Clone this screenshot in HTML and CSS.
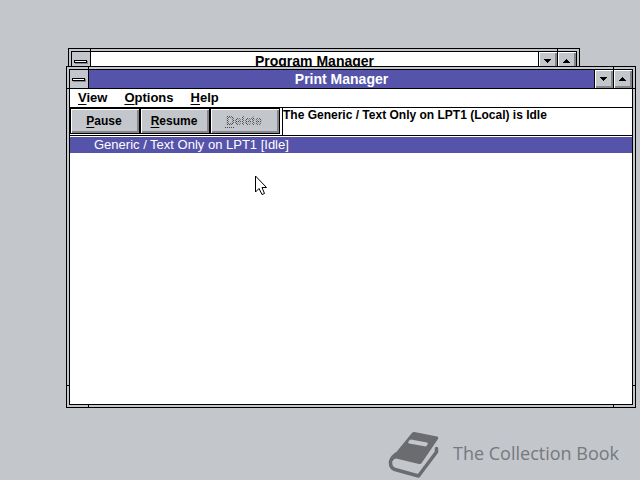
FILE: index.html
```
<!DOCTYPE html>
<html lang="en">
<head>
    <meta charset="UTF-8">
    <meta name="viewport" content="width=device-width, initial-scale=1.0">
    <title>Print Manager</title>
    <link rel="stylesheet" href="styles.css">
</head>
<body>
    <div class="desktop">
        <section class="window window-back">
            <div class="window-inner">
                <header class="titlebar">
                    <button class="control-box" aria-label="Control menu"><span class="control-bar"></span></button>
                    <h2 class="title">Program Manager</h2>
                    <button class="size-btn" aria-label="Minimize">
                        <svg width="7" height="4" viewBox="0 0 7 4" shape-rendering="crispEdges"><path d="M0 0h7v1H0zM1 1h5v1H1zM2 2h3v1H2zM3 3h1v1H3z"/></svg>
                    </button>
                    <button class="size-btn" aria-label="Maximize">
                        <svg width="7" height="4" viewBox="0 0 7 4" shape-rendering="crispEdges"><path d="M3 0h1v1H3zM2 1h3v1H2zM1 2h5v1H1zM0 3h7v1H0z"/></svg>
                    </button>
                </header>
            </div>
        </section>

        <main class="window window-front">
            <div class="window-inner">
                <header class="titlebar active">
                    <button class="control-box" aria-label="Control menu"><span class="control-bar"></span></button>
                    <h1 class="title">Print Manager</h1>
                    <button class="size-btn" aria-label="Minimize">
                        <svg width="7" height="4" viewBox="0 0 7 4" shape-rendering="crispEdges"><path d="M0 0h7v1H0zM1 1h5v1H1zM2 2h3v1H2zM3 3h1v1H3z"/></svg>
                    </button>
                    <button class="size-btn" aria-label="Maximize">
                        <svg width="7" height="4" viewBox="0 0 7 4" shape-rendering="crispEdges"><path d="M3 0h1v1H3zM2 1h3v1H2zM1 2h5v1H1zM0 3h7v1H0z"/></svg>
                    </button>
                </header>

                <nav class="menubar">
                    <button class="menu-item"><u>V</u>iew</button>
                    <button class="menu-item"><u>O</u>ptions</button>
                    <button class="menu-item"><u>H</u>elp</button>
                </nav>

                <div class="toolbar">
                    <button class="tool-btn"><u>P</u>ause</button>
                    <button class="tool-btn"><u>R</u>esume</button>
                    <button class="tool-btn" disabled><span class="dithered"><u>D</u>elete</span></button>
                    <p class="status">The Generic / Text Only on LPT1 (Local) is Idle</p>
                </div>

                <ul class="queue">
                    <li class="queue-item selected">Generic / Text Only on LPT1 [Idle]</li>
                </ul>
            </div>
        </main>

        <footer class="brand">
            <svg class="brand-logo" width="52" height="48" viewBox="0 0 52 48">
                <path fill="none" stroke="#6b6c6f" stroke-width="3.5" stroke-linecap="round" stroke-linejoin="round" d="M9 23 Q3 28 3.500 32 Q3.500 37 8 38.500 L31.500 45 L49.500 21 V17.500"/>
                <path fill="#6b6c6f" d="M24.500 2.500 Q25.500 .5 27.500 1 L50 5.500 Q52 6 51 8 L35 31.500 Q34 33.500 32 33 L9 27.500 Q7 27.500 5.500 30 L3 29 Q5 24 9 21.500 Z"/>
                <path fill="#c3c6cb" d="M24 8.500 L40 11.500 Q41.500 12 40.500 13.500 L39 15.500 L22 12.500 Q20.500 12 21.500 10.500 Q22.500 8.500 24 8.500 Z"/>
            </svg>
            <span class="brand-name">The Collection Book</span>
        </footer>

        <svg class="pointer" width="12" height="20" viewBox="0 0 12 20">
            <path fill="#fff" stroke="#000" d="M.5 1 V17 L4 13.500 L7 19.500 L9.500 18.500 L7 12.500 H11.500 Z"/>
        </svg>
    </div>
</body>
</html>
```
FILE: styles.css
```
:root {
    --grey: #c3c6cb;
    --shadow: #84868b;
    --blue: #5554aa;
    --black: #000000;
    --white: #ffffff;
}

* {
    box-sizing: border-box;
}

body {
    margin: 0;
    font-family: "Liberation Sans", Arial, sans-serif;
    font-size: 13px;
    color: var(--black);
    background-color: var(--grey);
}

button {
    margin: 0;
    padding: 0;
    border: none;
    font: inherit;
    color: inherit;
    background: none;
}

u {
    text-underline-offset: 2px;
}

.desktop {
    position: relative;
    display: flex;
    flex-direction: column;
    justify-content: flex-end;
    height: 100vh;
    overflow: hidden;
}

/* Windows */
.window {
    position: absolute;
    padding: 2px;
    border: 1px solid var(--black);
    background-color: var(--grey);
    /* resize corner marks, only visible in the frame */
    background-image:
        linear-gradient(var(--black), var(--black)),
        linear-gradient(var(--black), var(--black)),
        linear-gradient(var(--black), var(--black)),
        linear-gradient(var(--black), var(--black));
    background-repeat: no-repeat;
    background-size: 1px 100%, 1px 100%, 100% 1px, 100% 1px;
    background-position: left 21px top, right 21px top, left top 21px, left bottom 21px;
}

.window-back {
    top: 48px;
    right: 60px;
    bottom: 80px;
    left: 68px;
}

.window-front {
    top: 66px;
    right: 4px;
    bottom: 72px;
    left: 66px;
}

.window-inner {
    display: flex;
    flex-direction: column;
    height: 100%;
    border: 1px solid var(--black);
    background-color: var(--white);
}

.titlebar {
    display: flex;
    flex: none;
    height: 19px;
    border-bottom: 1px solid var(--black);
}

.titlebar.active {
    color: var(--white);
    background-color: var(--blue);
}

.control-box {
    display: flex;
    align-items: center;
    justify-content: center;
    width: 19px;
    padding-right: 1px;
    border-right: 1px solid var(--black);
    background-color: var(--grey);
}

.control-bar {
    width: 13px;
    height: 3px;
    border: 1px solid var(--black);
    background-color: var(--white);
    box-shadow: 1px 1px 0 var(--shadow);
}

.title {
    flex: 1;
    margin: 0;
    font-size: 14px;
    line-height: 18px;
    text-align: center;
}

.size-btn {
    display: flex;
    align-items: center;
    justify-content: center;
    width: 19px;
    padding-right: 2px;
    border-left: 1px solid var(--black);
    background-color: var(--grey);
    box-shadow: inset 1px 1px 0 var(--white), inset -2px -2px 0 var(--shadow);
}

.menubar {
    display: flex;
    flex: none;
    gap: 17px;
    height: 19px;
    padding: 0 8px;
    border-bottom: 1px solid var(--black);
}

.menu-item {
    font-weight: bold;
    line-height: 18px;
}

.toolbar {
    display: flex;
    flex: none;
    height: 28px;
    border-bottom: 1px solid var(--black);
}

.tool-btn {
    width: 70px;
    height: 26px;
    padding-right: 2px;
    border: 1px solid var(--black);
    font-size: 12px;
    font-weight: bold;
    background-color: var(--grey);
    box-shadow: inset 1px 1px 0 var(--white), inset -2px -2px 0 var(--shadow);
}

/* checkerboard showing through the letters */
.dithered {
    color: transparent;
    background: repeating-conic-gradient(#45474b 0 25%, var(--grey) 0 50%) 0 0 / 2px 2px;
    -webkit-background-clip: text;
    background-clip: text;
}

.dithered u {
    text-decoration: underline dotted 1px #45474b;
}

.status {
    flex: 1;
    margin: 0 0 0 2px;
    border-left: 1px solid var(--black);
    font-size: 12px;
    font-weight: bold;
    line-height: 14px;
}

.queue {
    flex: 1;
    margin: 0;
    padding: 1px 0 0;
    list-style: none;
}

.queue-item {
    padding: 0 24px;
    font-size: 13px;
    line-height: 16px;
}

.queue-item.selected {
    color: var(--white);
    background-color: var(--blue);
}

.brand {
    display: flex;
    align-items: center;
    justify-content: flex-end;
    gap: 14px;
    padding: 0 21px 1px;
    color: #77797d;
}

.brand-name {
    font-family: "Open Sans", "Noto Sans", sans-serif;
    font-size: 18px;
    line-height: 44px;
    align-self: flex-start;
}

.pointer {
    position: absolute;
    top: 175px;
    left: 255px;
}
```
